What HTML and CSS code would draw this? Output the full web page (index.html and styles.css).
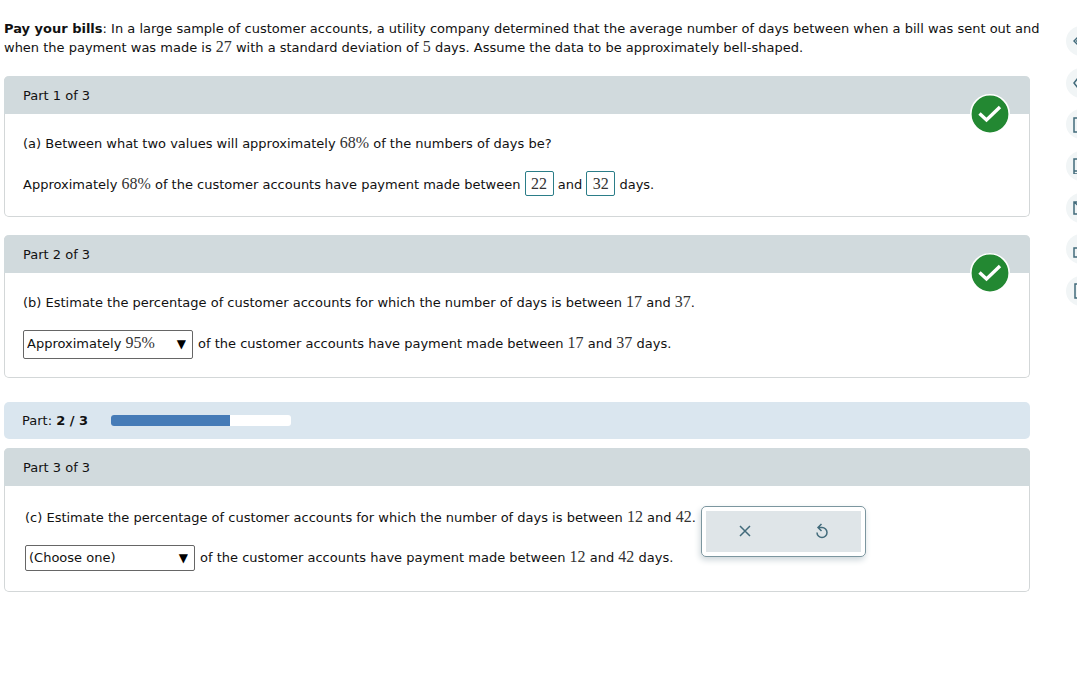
FILE: index.html
```
<!DOCTYPE html>
<html lang="en">
<head>
	<meta charset="UTF-8">
	<title>Pay your bills</title>
	<link rel="stylesheet" href="styles.css">
</head>
<body>
	<main class="content">
		<p class="intro"><b>Pay your bills</b>: In a large sample of customer accounts, a utility company determined that the average number of days between when a bill was sent out and when the payment was made is <span class="num">27</span> with a standard deviation of <span class="num">5</span> days. Assume the data to be approximately bell-shaped.</p>

		<section class="card">
			<div class="card-head">
				Part 1 of 3
				<svg class="check" viewBox="0 0 40 40" role="img" aria-label="Correct"><circle cx="20" cy="20" r="19.2" fill="#238832" stroke="#fff" stroke-width="1.6"/><path d="M9.5 19.5l7 6.5 13.5-13" fill="none" stroke="#fff" stroke-width="3.4"/></svg>
			</div>
			<div class="card-body">
				<p>(a) Between what two values will approximately <span class="num">68%</span> of the numbers of days be?</p>
				<p class="row">Approximately <span class="num">68%</span> of the customer accounts have payment made between <input class="answer num" type="text" value="22" aria-label="Lower value" readonly> and <input class="answer num" type="text" value="32" aria-label="Upper value" readonly> days.</p>
			</div>
		</section>

		<section class="card">
			<div class="card-head">
				Part 2 of 3
				<svg class="check" viewBox="0 0 40 40" role="img" aria-label="Correct"><circle cx="20" cy="20" r="19.2" fill="#238832" stroke="#fff" stroke-width="1.6"/><path d="M9.5 19.5l7 6.5 13.5-13" fill="none" stroke="#fff" stroke-width="3.4"/></svg>
			</div>
			<div class="card-body">
				<p>(b) Estimate the percentage of customer accounts for which the number of days is between <span class="num">17</span> and <span class="num">37</span>.</p>
				<div class="row">
					<select class="choice tall" id="percentB">
						<button><selectedcontent></selectedcontent></button>
						<option selected>Approximately <span class="num">95%</span></option>
					</select>
					<label for="percentB">of the customer accounts have payment made between <span class="num">17</span> and <span class="num">37</span> days.</label>
				</div>
			</div>
		</section>

		<div class="status">
			<span>Part: <b>2 / 3</b></span>
			<div class="bar"><div class="bar-fill"></div></div>
		</div>

		<section class="card">
			<div class="card-head">Part 3 of 3</div>
			<div class="card-body active">
				<div class="question">
					<p>(c) Estimate the percentage of customer accounts for which the number of days is between <span class="num">12</span> and <span class="num">42</span>.</p>
					<div class="row">
						<select class="choice" id="percentC">
							<button><selectedcontent></selectedcontent></button>
							<option selected>(Choose one)</option>
						</select>
						<label for="percentC">of the customer accounts have payment made between <span class="num">12</span> and <span class="num">42</span> days.</label>
					</div>
				</div>
				<div class="tools">
					<button type="button" aria-label="Clear"><svg viewBox="0 0 16 16"><path d="M3 3l10 10M13 3L3 13"/></svg></button>
					<button type="button" aria-label="Undo"><svg viewBox="0 0 16 16"><path d="M3 9.5a5 5 0 1 0 5-5H4M7.5 1L4 4.5 7.5 8"/></svg></button>
				</div>
			</div>
		</section>
	</main>

	<nav class="side">
		<button type="button" aria-label="Collapse"><svg viewBox="0 0 16 16"><path d="M5 4L1 8l4 4M3 8h6"/></svg></button>
		<button type="button" aria-label="View"><svg viewBox="0 0 16 16"><path d="M5 3L1 8l4 5"/></svg></button>
		<button type="button" aria-label="Calculator"><svg viewBox="0 0 16 16"><path d="M1 1h12v14H1zM4 4h6M4 7h6"/></svg></button>
		<button type="button" aria-label="Book"><svg viewBox="0 0 16 16"><path d="M1 1h12v15H1zM1 13h12"/></svg></button>
		<button type="button" aria-label="Message"><svg viewBox="0 0 16 16"><path d="M1 2h14v12H1zM1 2l7 6 7-6"/></svg></button>
		<button type="button" aria-label="Print"><svg viewBox="0 0 16 16"><path d="M1 6h14v9H1z"/></svg></button>
		<button type="button" aria-label="Notes"><svg viewBox="0 0 16 16"><path d="M2 1h11v14H2z"/></svg></button>
	</nav>
</body>
</html>
```
FILE: styles.css
```
*{box-sizing: border-box;}
body{
	display: flex;
	margin: 0;
	font: 13px/19px Verdana, "DejaVu Sans", sans-serif;
	color: #111;
	background-color: #fff;
}
p{margin: 0;}

.content{
	flex: 1;
	min-width: 0;
	padding: 19px 0 0 4px;
}
.intro{margin: 0 -14px 19px 0;}
.num{
	font-family: "Liberation Serif", serif;
	font-size: 16px;
	line-height: 16px;
	color: #333;
}

/* question parts */
.card{
	margin-bottom: 18px;
	border: 1px solid #d3d7d8;
	border-top: none;
	border-radius: 5px;
}
.card-head{
	position: relative;
	margin: 0 -1px;
	padding: 10px 19px 9px;
	background-color: #d1dadd;
	border-radius: 5px 5px 0 0;
}
.check{
	position: absolute;
	right: 20px;
	bottom: -20px;
	width: 40px;
	height: 40px;
}
.card-body{padding: 20px 18px 18px;}
.row{
	margin-top: 18px;
	line-height: 26px;
}
div.row{
	display: flex;
	align-items: center;
	gap: 5px;
}

.answer{
	width: 29px;
	height: 25px;
	padding: 0;
	text-align: center;
	background-color: #fff;
	border: 1px solid #2b7d88;
	border-radius: 2px;
}

.choice, .choice::picker(select){appearance: base-select;}
.choice{
	display: flex;
	align-items: center;
	width: 170px;
	height: 26px;
	min-height: 0;
	padding: 0 6px 0 3px;
	font: inherit;
	color: #111;
	background-color: #fff;
	border: 1px solid #666;
	border-radius: 2px;
}
.choice.tall{height: 29px;}
.choice button{
	display: block;
	flex: 1;
	text-align: left;
}
.choice::picker-icon{
	content: "▼";
	font-size: 12px;
	color: #000;
}

/* progress */
.status{
	display: flex;
	align-items: center;
	gap: 23px;
	margin: 24px 0 9px;
	padding: 9px 18px;
	background-color: #dae6ef;
	border-radius: 5px;
}
.bar{
	width: 180px;
	height: 11px;
	overflow: hidden;
	background-color: #fff;
	border-radius: 3px;
}
.bar-fill{
	width: 66%;
	height: 100%;
	background-color: #457bb7;
}

.active{
	display: flex;
	align-items: flex-start;
	gap: 5px;
	padding: 20px;
}
.question{padding-top: 2px;}
.tools{
	display: flex;
	width: 165px;
	height: 51px;
	padding: 4px;
	border: 1px solid #7c969f;
	border-radius: 5px;
	box-shadow: -1px 3px 6px #cdd6da;
}
.tools button{
	flex: 1;
	padding: 0;
	background-color: #dfe5e8;
	border: none;
}
.tools svg, .side svg{
	width: 16px;
	height: 16px;
	fill: none;
	stroke: #426b7b;
	stroke-width: 1.5;
	vertical-align: middle;
}

/* icon strip, runs off the right edge */
.side{
	display: flex;
	flex-direction: column;
	justify-content: space-between;
	width: 11px;
	height: 280px;
	margin: 26px 0 0 36px;
	overflow: hidden;
}
.side button{
	width: 30px;
	height: 30px;
	padding: 0;
	background-color: #f1f5f6;
	border: none;
	border-radius: 50%;
}
```
